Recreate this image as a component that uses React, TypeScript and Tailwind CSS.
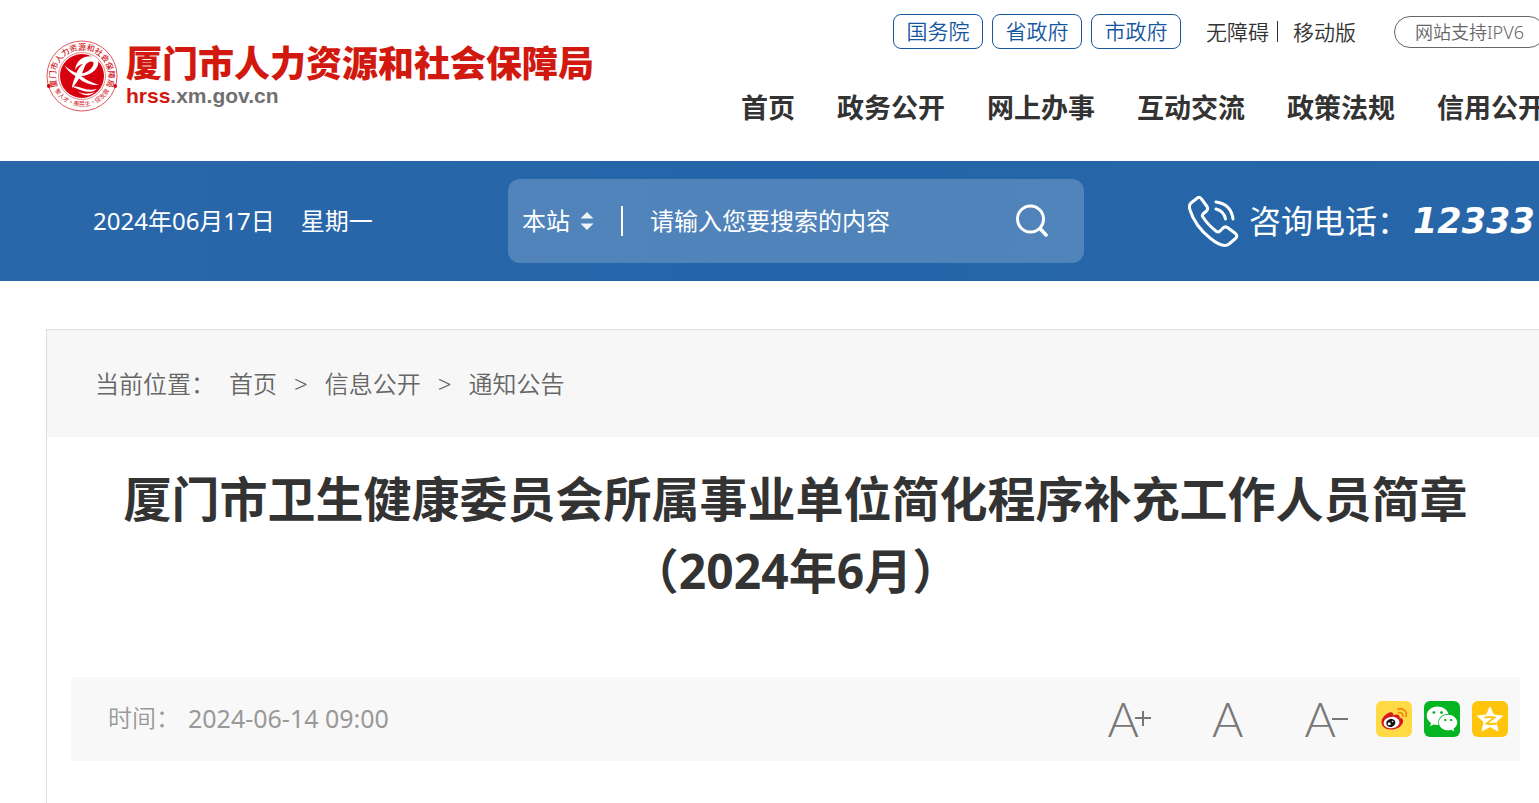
import { FaWeixin } from 'react-icons/fa';

const govLinks = ['国务院', '省政府', '市政府'];
const navItems = ['首页', '政务公开', '网上办事', '互动交流', '政策法规', '信用公开'];
const crumbs = ['首页', '信息公开', '通知公告'];

function Seal() {
  return (
    <svg viewBox="0 0 72 72" className="h-[72px] w-[72px] shrink-0" aria-hidden="true">
      <defs>
        <path id="sealTop" d="M11.500 46 A26.400 26.400 0 1 1 60.500 46" />
        <path id="sealBottom" d="M6.500 46 A31.500 31.500 0 0 0 65.500 46" />
      </defs>
      <circle cx="36" cy="36" r="35" fill="#fff" stroke="#e0565b" strokeWidth="1" />
      <circle cx="36" cy="36" r="23.500" fill="none" stroke="#e0565b" strokeWidth="0.7" />
      <circle cx="36" cy="36" r="22" fill="#d7000f" />
      <text fill="#d2161d" fontSize="8" fontWeight="500" fontFamily="'Noto Sans CJK SC', sans-serif">
        <textPath href="#sealTop" startOffset="50%" textAnchor="middle">厦门市人力资源和社会保障局</textPath>
      </text>
      <text fill="#d2161d" fontSize="6" fontFamily="'Noto Sans CJK SC', sans-serif">
        <textPath href="#sealBottom" startOffset="50%" textAnchor="middle">聚人才·惠民生·促发展</textPath>
      </text>
      <circle cx="2.800" cy="46" r="1.900" fill="#d7000f" />
      <circle cx="69.200" cy="46" r="1.900" fill="#d7000f" />
      <path
        d="M29 30 C30 19 40 15 47 16.500 C54 18 54 26 48 31 C44 34.500 39 36 35 36 C38 38 43 42 53 45 C44 45.500 37 42 33 38.500 C31 42 29 45 26 48 C26 44 28 40 29.500 36 C25 33.500 21 30 18.500 25.500 C22 28.500 26 31 30.500 33 C32 29 34 26 37 24 C34 24 31 26.500 29 30Z M36 33.500 C41 33 47 28 47.500 24 C48 20 42 21 39.500 25 C38 28 37 31 36 33.500Z"
        fill="#fff"
        fillRule="evenodd"
      />
      <path d="M26 46.500 C33 45 39 52 51 49 C44 55 34 50 26 46.500Z" fill="#fff" />
      <path d="M32 51.500 C38 54.500 43 54 49 52 C43 57 37 56 32 51.500Z" fill="#fff" />
    </svg>
  );
}

function PhoneIcon() {
  return (
    <svg viewBox="0 0 52 52" className="h-[52px] w-[52px] shrink-0" fill="none" stroke="#fff" strokeWidth="3" strokeLinejoin="round" strokeLinecap="round" aria-hidden="true">
      <path d="M11 2.500 L4 8 Q1.500 10 3 15 Q8 31 23 43 Q32 50.500 38 50.500 Q40 50.500 42 49 L48.500 43.500 Q51 41 48.500 38.500 L40.500 32.500 Q38 31 36 33 L32.500 36.500 Q31 37.500 29.500 36.500 Q21 30 15.500 21.500 Q15 20 16 19 L19.500 16 Q21.500 14 20 11.500 L14.500 4 Q13 1.500 11 2.500Z" />
      <path d="M29 7 Q44 9 46 24" />
      <path d="M29 14 Q37 16 38.500 24" />
    </svg>
  );
}

function WeiboIcon() {
  return (
    <svg viewBox="0 0 36 36" className="h-9 w-9" aria-hidden="true">
      <path d="M5.500 21 C5.500 16 12 10.500 15.500 11.200 C17.500 11.500 17.500 13.500 17 14.500 C20 13 24 13 23.500 16.500 C26 17 27.500 18.500 27 21 C26 26 20 28.500 15 28.500 C9 28.500 5.500 25 5.500 21Z" fill="#d6191b" />
      <ellipse cx="15.500" cy="21.600" rx="8" ry="5.700" fill="#fff" transform="rotate(-7 15.500 21.600)" />
      <ellipse cx="14.800" cy="21.900" rx="4.600" ry="4" fill="#111" transform="rotate(-20 14.800 21.900)" />
      <circle cx="13.200" cy="22.800" r="1.500" fill="#fff" />
      <circle cx="16.500" cy="20.500" r="0.800" fill="#fff" />
      <path d="M22 8.200 C27 6.500 31.500 10.500 30 15.500 M22.500 11.700 C25.500 11 27.500 13 26.700 15.500" fill="none" stroke="#ee8a12" strokeWidth="1.800" strokeLinecap="round" />
    </svg>
  );
}

function QzoneIcon() {
  return (
    <svg viewBox="0 0 36 36" className="h-9 w-9" aria-hidden="true">
      <path d="M18 6 L21.500 14 L30.500 15 L24 21 L26 30 L18 25.500 L10 30 L12 21 L5.500 15 L14.500 14Z" fill="#fff" stroke="#fff" strokeLinejoin="round" />
      <path d="M12.500 16.500 Q18 15.500 22.500 16.500 L14.500 22.500 Q19 23.500 24.500 22.500" fill="none" stroke="#ffc40c" strokeWidth="1.800" />
    </svg>
  );
}

export default function App() {
  return (
    <div className="flex min-h-screen w-full flex-col overflow-x-hidden bg-white font-['Noto_Sans','Noto_Sans_CJK_SC',sans-serif] text-[#333]">
      <header className="mr-[-6px] ml-[46px] flex h-[161px] shrink-0 justify-between">
        <a href="#" className="flex items-start gap-2 pt-10">
          <Seal />
          <span className="flex flex-col whitespace-nowrap">
            <span className="text-[36px] leading-[48px] font-black text-[#d2190f]">厦门市人力资源和社会保障局</span>
            <span className="font-['Liberation_Sans',sans-serif] text-[21px] leading-4 font-bold text-[#707070]">
              <span className="text-[#d2190f]">hrss</span>.xm.gov.cn
            </span>
          </span>
        </a>

        <div className="flex shrink-0 flex-col items-end whitespace-nowrap">
          <div className="mt-[14px] flex items-center text-[21px] leading-8 font-[350]">
            <div className="flex gap-[9px]">
              {govLinks.map((name) => (
                <a key={name} href="#" className="flex h-[35px] w-[90px] items-center justify-center rounded-lg border border-[#1556a0] pb-0.5 text-[#1556a0]">
                  {name}
                </a>
              ))}
            </div>
            <a href="#" className="ml-[25px]">无障碍</a>
            <span className="mx-2 h-[21px] w-px bg-[#333]" />
            <a href="#" className="ml-[7px]">移动版</a>
            <a href="#" className="ml-[38px] flex h-8 w-[151px] items-center justify-center rounded-full border border-[#666] text-[18px] text-[#666]">
              网站支持IPV6
            </a>
          </div>
          <nav className="mt-[41px] flex gap-[42px] text-[27px] leading-9 font-bold">
            {navItems.map((item) => (
              <a key={item} href="#">{item}</a>
            ))}
          </nav>
        </div>
      </header>

      <section className="h-[120px] shrink-0 bg-linear-to-r from-[#2a67a9] via-[#2465a9] to-[#2766a8] text-white">
        <div className="mr-[-6px] ml-[93px] flex h-full items-center whitespace-nowrap">
          <p className="w-[415px] shrink-0 text-2xl">
            2024年06月17日<span className="ml-[26px]">星期一</span>
          </p>
          <form className="flex h-[84px] w-[576px] shrink-0 items-center rounded-xl bg-white/20 pr-9 pl-[14px] text-2xl">
            <select aria-label="搜索范围" className="w-12 appearance-none bg-transparent text-white outline-none">
              <option>本站</option>
            </select>
            <svg viewBox="0 0 14 20" className="ml-[10px] h-5 w-[14px]" fill="#eef3fa" aria-hidden="true">
              <path d="M7 1 L13.500 7.500 H0.500Z M7 19 L13.500 12.500 H0.500Z" />
            </svg>
            <span className="ml-[27px] h-[30px] w-0.5 bg-white" />
            <input
              type="text"
              aria-label="搜索内容"
              placeholder="请输入您要搜索的内容"
              className="ml-[27px] min-w-0 flex-1 bg-transparent text-white outline-none placeholder:text-white"
            />
            <button type="button" aria-label="搜索">
              <svg viewBox="0 0 32 34" className="h-[34px] w-8" fill="none" stroke="#fff" strokeWidth="3" strokeLinecap="round">
                <circle cx="14.500" cy="15" r="13" />
                <path d="M24.500 25 L30 31" strokeWidth="3.500" />
              </svg>
            </button>
          </form>
          <div className="ml-auto flex w-[358px] shrink-0 items-center">
            <PhoneIcon />
            <span className="ml-[10px] text-[32px]">咨询电话：</span>
            <span className="ml-1 font-['DejaVu_Sans',sans-serif] text-[35px] font-bold italic">12333</span>
          </div>
        </div>
      </section>

      <main className="mt-12 mr-[-6px] ml-[46px] flex-1 border border-b-0 border-[#ddd]">
        <nav aria-label="当前位置" className="flex h-[107px] items-center bg-[#f7f7f7] pl-12 text-2xl font-[350] text-[#666]">
          <span className="mr-[14px]">当前位置：</span>
          {crumbs.map((crumb, i) => (
            <span key={crumb} className="flex">
              {i > 0 && <span className="mx-[17px]">&gt;</span>}
              <a href="#">{crumb}</a>
            </span>
          ))}
        </nav>

        <article className="px-6 pt-[26px]">
          <h1 className="text-center text-5xl leading-[72px] font-bold">
            厦门市卫生健康委员会所属事业单位简化程序补充工作人员简章
            <br />
            （2024年6月）
          </h1>

          <div className="mt-[70px] flex h-[84px] items-center justify-between bg-[#f8f8f8] pr-3 pl-[37px]">
            <p className="flex text-[25px] text-[#999]">
              <span className="w-20 text-2xl leading-9 font-[350]">时间：</span>
              <time>2024-06-14 09:00</time>
            </p>
            <div className="flex items-center">
              <div className="flex gap-[61px] font-['Lato',sans-serif] text-5xl leading-[50px] font-light text-[#777]">
                <button type="button" aria-label="放大字体" className="flex items-center">
                  A
                  <svg viewBox="0 0 16 16" className="-ml-1 h-4 w-4" stroke="#777" strokeWidth="2" aria-hidden="true">
                    <path d="M0 7 H16 M8 0 V15" />
                  </svg>
                </button>
                <button type="button" aria-label="默认字体">A</button>
                <button type="button" aria-label="缩小字体" className="flex items-center">
                  A
                  <svg viewBox="0 0 16 16" className="-ml-1 h-4 w-4" stroke="#777" strokeWidth="2" aria-hidden="true">
                    <path d="M0 8 H16" />
                  </svg>
                </button>
              </div>
              <div className="ml-7 flex gap-3">
                <a href="#" aria-label="新浪微博" className="h-9 w-9 rounded-md bg-[#ffda44]">
                  <WeiboIcon />
                </a>
                <a href="#" aria-label="微信" className="flex h-9 w-9 items-center justify-center rounded-md bg-[#04b521]">
                  <FaWeixin className="h-8 w-8 text-white" />
                </a>
                <a href="#" aria-label="QQ空间" className="h-9 w-9 rounded-md bg-[#ffc40c]">
                  <QzoneIcon />
                </a>
              </div>
            </div>
          </div>
        </article>
      </main>
    </div>
  );
}
